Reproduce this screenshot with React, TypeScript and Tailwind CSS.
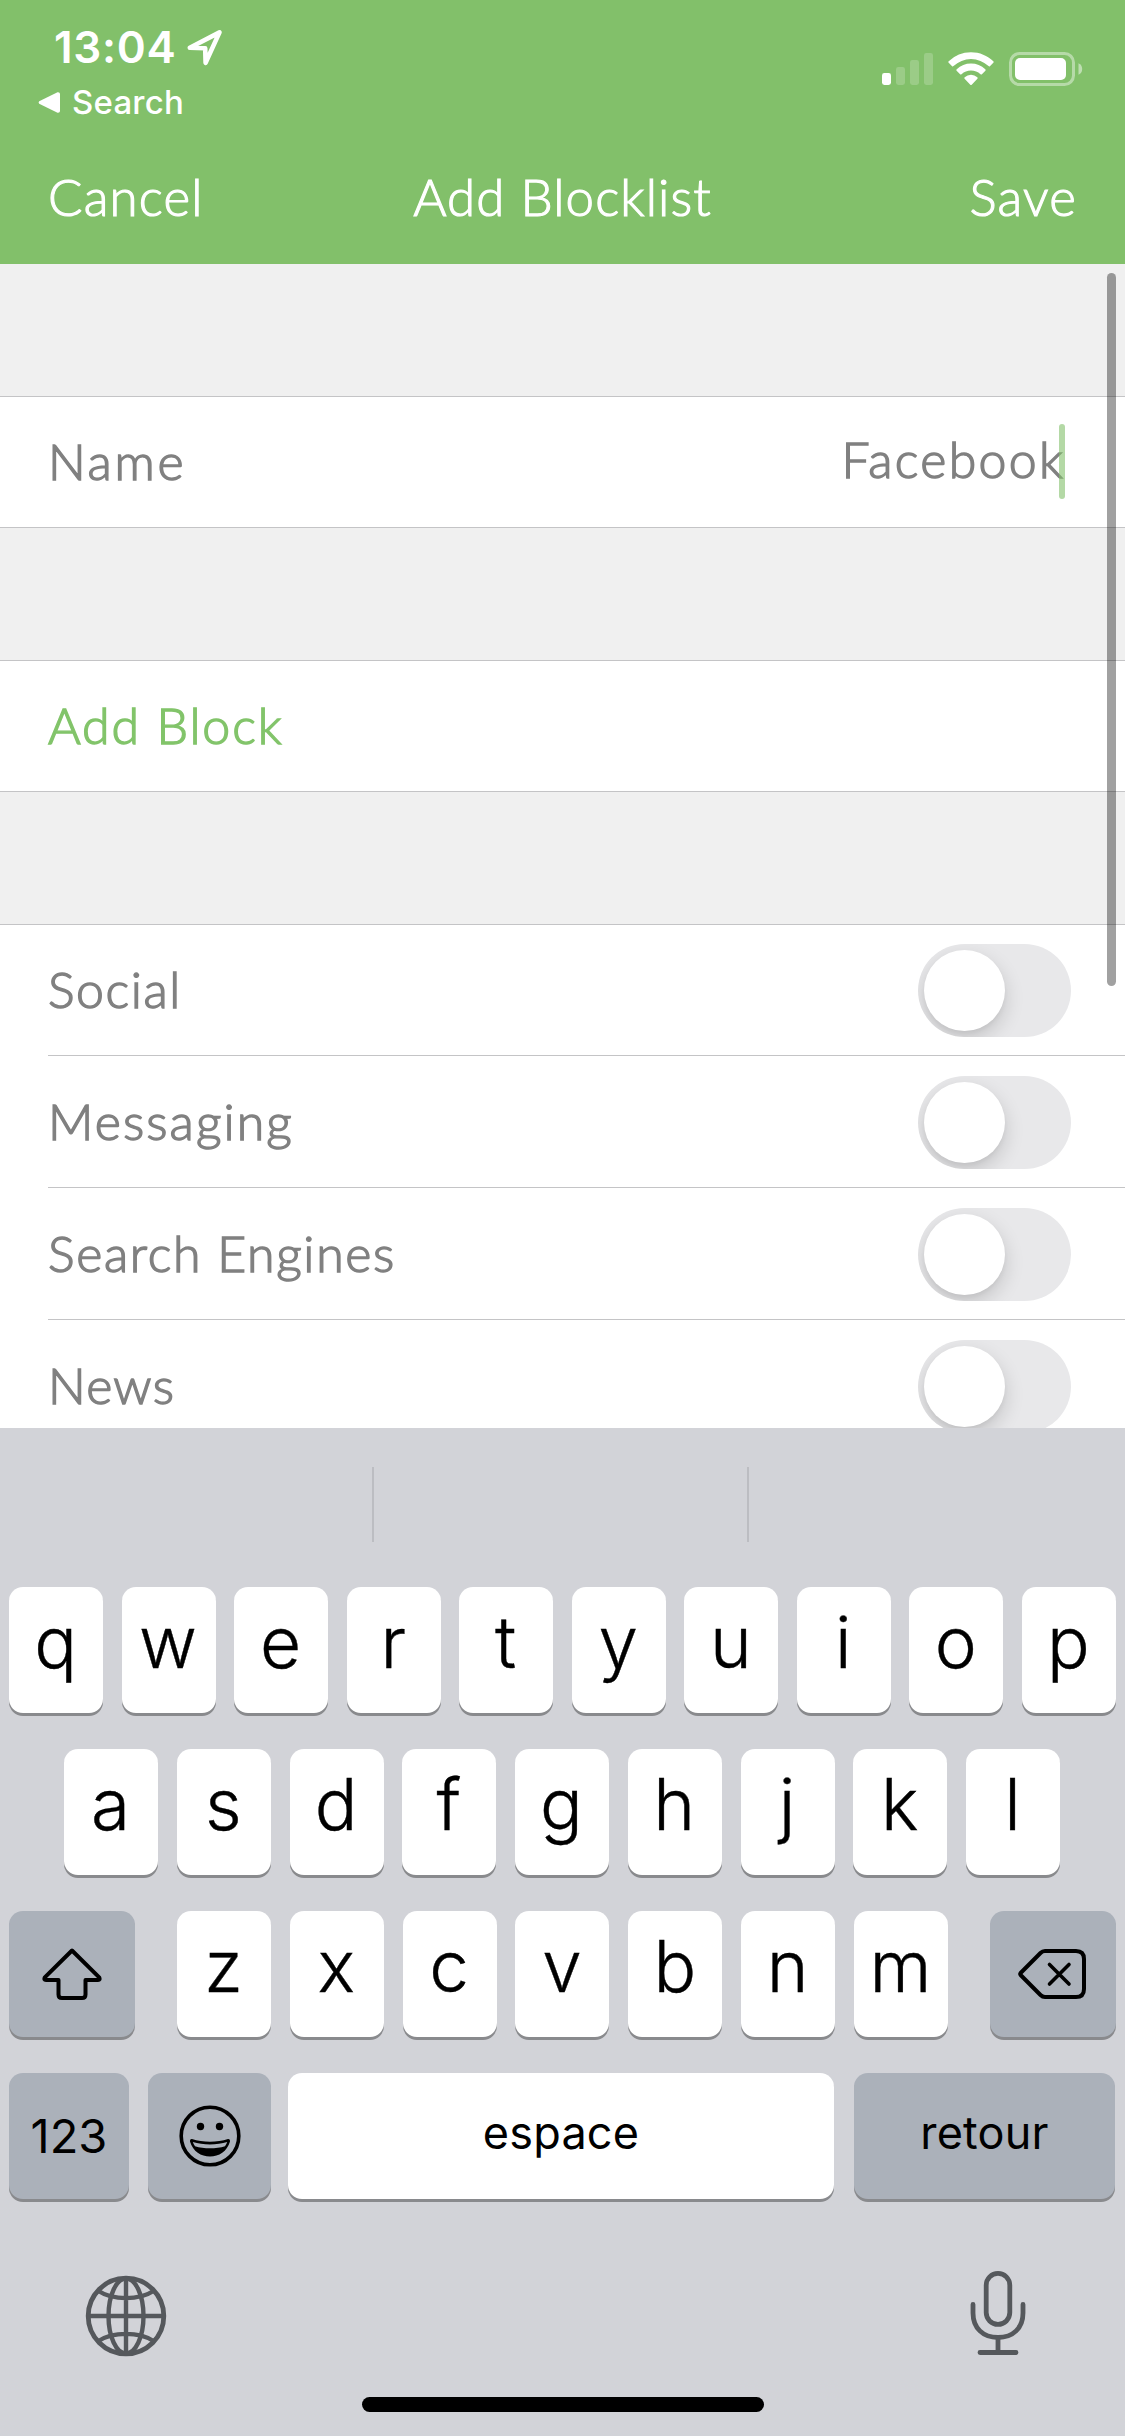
import React from "react";

const BODY_FONT = "font-['Lato','Open_Sans',sans-serif]";

function LocationIcon() {
  return (
    <svg width="36" height="37" viewBox="0 0 36 37" fill="none" stroke="#fff" strokeWidth="4.6" strokeLinejoin="round">
      <path d="M2.800 18.800 32.500 3.400 18.600 33.800 18.200 19.200Z" />
    </svg>
  );
}

function SignalIcon() {
  return (
    <svg width="51" height="34" viewBox="0 0 51 34" fill="#fff">
      <rect x="0" y="21" width="9" height="12" rx="2.4" />
      <rect x="14" y="15" width="9" height="18" rx="2.4" opacity=".2" />
      <rect x="28" y="8" width="9" height="25" rx="2.4" opacity=".2" />
      <rect x="42" y="1" width="9" height="32" rx="2.4" opacity=".2" />
    </svg>
  );
}

function WifiIcon() {
  return (
    <svg width="46" height="34" viewBox="0 0 46 34" fill="#fff">
      <path d="M23 .2C31.600 .2 39.500 3.600 45.300 9.200Q46 9.900 45.300 10.700L41.900 14.200Q41.300 14.800 40.500 14.100A25.300 25.300 0 0 0 5.500 14.100Q4.700 14.800 4.100 14.200L.7 10.700Q0 9.900.7 9.200A32 32 0 0 1 23 .2Z" />
      <path d="M23 11.600A21 21 0 0 1 37.300 17.300Q38.100 18 37.400 18.800L33.900 22.300Q33.300 22.900 32.500 22.200A14.100 14.100 0 0 0 13.500 22.200Q12.700 22.900 12.100 22.300L8.600 18.800Q7.900 18 8.700 17.300A21 21 0 0 1 23 11.600Z" />
      <path d="M23 22.800A10 10 0 0 1 29.300 25.300Q30.100 26 29.400 26.800L23.700 32.700Q23 33.300 22.300 32.700L16.600 26.800Q15.900 26 16.700 25.300A10 10 0 0 1 23 22.800Z" />
    </svg>
  );
}

function BatteryIcon() {
  return (
    <svg width="74" height="34" viewBox="0 0 74 34" fill="none">
      <rect x="1.500" y="1.500" width="63" height="31" rx="9" stroke="#fff" strokeOpacity=".42" strokeWidth="3" />
      <rect x="6" y="6" width="51" height="22" rx="5" fill="#fff" />
      <path d="M69.500 11.200A6.400 6.400 0 0 1 69.500 22.800Z" fill="#fff" fillOpacity=".48" />
    </svg>
  );
}

function Header() {
  return (
    <header className="h-[264px] shrink-0 bg-[#82c06a] text-white">
      <div className="flex h-[136px] items-start justify-between pl-[38px] pr-[42px]">
        <div className="font-['Inter',sans-serif]">
          <div className="flex h-[60px] items-center pl-[16px] pt-[34px]">
            <span className="w-[133px] text-[44px] font-semibold leading-none tracking-[0.7px]">13:04</span>
            <LocationIcon />
          </div>
          <div className="flex h-[76px] items-center pt-[8px]">
            <svg width="22" height="21" viewBox="0 0 22 21" fill="#fff">
              <path d="M1.200 9.300 19.500.3Q22 0 22 2V19Q22 21 19.500 20.700L1.200 11.700Q0 10.500 1.200 9.300Z" />
            </svg>
            <span className="ml-[12px] text-[33px] font-medium leading-none tracking-[0.2px]">Search</span>
          </div>
        </div>
        <div className="flex pt-[52px]">
          <SignalIcon />
          <div className="ml-[15px]"><WifiIcon /></div>
          <div className="ml-[15px]"><BatteryIcon /></div>
        </div>
      </div>
      <nav className={`grid h-[122px] grid-cols-3 items-center px-[48px] text-[51px] font-light [-webkit-text-stroke:1.1px_currentColor] ${BODY_FONT}`}>
        <span className="tracking-[1.2px]">Cancel</span>
        <span className="text-center tracking-[1.1px]">Add Blocklist</span>
        <span className="text-right tracking-[1.2px]">Save</span>
      </nav>
    </header>
  );
}

function Toggle() {
  return (
    <div className="h-[93px] w-[153px] shrink-0 overflow-hidden rounded-full bg-[#e8e8ea] p-[6px]">
      <div className="size-[81px] rounded-full bg-white shadow-[0_8px_20px_rgba(0,0,0,0.16),0_3px_4px_rgba(0,0,0,0.04)]" />
    </div>
  );
}

const CATEGORIES = [
  { name: "Social", tracking: "tracking-[1.6px]" },
  { name: "Messaging", tracking: "tracking-[2.1px]" },
  { name: "Search Engines", tracking: "tracking-[1.65px]" },
  { name: "News", tracking: "tracking-[1.2px]" },
];

function Settings() {
  return (
    <main className={`relative h-[1164px] shrink-0 overflow-hidden bg-[#f0f0f0] pt-[132px] text-[50px] font-light text-[#808080] [-webkit-text-stroke:1.4px_currentColor] ${BODY_FONT}`}>
      <div className="flex h-[132px] items-center justify-between border-y border-[#c4c4c6] bg-white pl-[48px] pr-[60px]">
        <span className="pb-[2px] tracking-[2.7px]">Name</span>
        <div className="relative mb-[2px] flex h-[75px] items-center pb-[3px]">
          <span className="tracking-[2.3px]">Facebook</span>
          <i className="absolute right-0 top-0 h-[75px] w-[6px] rounded-full bg-[#82c06a]/60" />
        </div>
      </div>
      <div className="mt-[132px] flex h-[132px] items-center border-y border-[#c4c4c6] bg-white pl-[48px] text-[#82c46a]">
        <span className="pb-[2px] tracking-[1.9px]">Add Block</span>
      </div>
      <div className="mt-[132px] border-t border-[#c4c4c6] bg-white pl-[48px]">
        {CATEGORIES.map((c) => (
          <div key={c.name} className="flex h-[132px] items-center justify-between border-b border-[#c4c4c6] pr-[54px] pt-[2px] first:h-[131px] first:pt-0">
            <span className={`pb-[2px] ${c.tracking}`}>{c.name}</span>
            <Toggle />
          </div>
        ))}
      </div>
      <div className="absolute right-[9px] top-[9px] h-[713px] w-[9px] rounded-full bg-black/37" />
    </main>
  );
}

const KEY = "flex h-[126px] items-center justify-center rounded-[14px] shadow-[0_3px_0_#898a8d]";

function LetterKey({ children }: { children: string }) {
  return <div className={`${KEY} w-[94px] shrink-0 bg-white pb-[16px] pr-px text-[71px] font-[350] leading-none [-webkit-text-stroke:0.4px_#000]`}>{children}</div>;
}

function Keyboard() {
  return (
    <section className="flex h-[1008px] flex-col bg-[#d2d3d8] font-['Inter',sans-serif] text-black">
      <div className="flex h-[159px] pt-[39px]">
        <div className="h-[75px] w-[374px] border-r-2 border-[#bcbdc2]" />
        <div className="h-[75px] w-[375px] border-r-2 border-[#bcbdc2]" />
      </div>
      <div className="flex h-[162px] justify-between px-[9px]">
        {"qwertyuiop".split("").map((k) => <LetterKey key={k}>{k}</LetterKey>)}
      </div>
      <div className="flex h-[162px] justify-between pl-[64px] pr-[65px]">
        {"asdfghjkl".split("").map((k) => <LetterKey key={k}>{k}</LetterKey>)}
      </div>
      <div className="flex h-[162px] justify-between px-[9px]">
        <div className={`${KEY} w-[126px] bg-[#abb1ba]`}>
          <svg width="60" height="54" viewBox="0 0 60 54" fill="none" stroke="#000" strokeWidth="4" strokeLinejoin="round">
            <path d="M30 3.500 57.200 30.400Q58.400 33 56 33H43.500V47.500Q43.500 51 40 51H20Q16.500 51 16.500 47.500V33H4Q1.600 33 2.800 30.400Z" />
          </svg>
        </div>
        <div className="flex w-[771px] justify-between">
          {"zxcvbnm".split("").map((k) => <LetterKey key={k}>{k}</LetterKey>)}
        </div>
        <div className={`${KEY} w-[126px] bg-[#abb1ba] pr-[2px]`}>
          <svg width="68" height="50" viewBox="0 0 68 50" fill="none" stroke="#000" strokeWidth="4" strokeLinejoin="round" strokeLinecap="round">
            <path d="M27 2H58Q66 2 66 10V40Q66 48 58 48H27Q24.500 48 22.500 46L2.600 26Q1.800 25 2.600 24L22.500 4Q24.500 2 27 2Z" />
            <path d="M31.500 15.500 51 35M51 15.500 31.500 35" strokeWidth="3.600" />
          </svg>
        </div>
      </div>
      <div className="flex h-[129px] px-[9px]">
        <div className={`${KEY} w-[120px] bg-[#abb1ba] text-[47px] font-[380] tracking-[0px]`}>123</div>
        <div className={`${KEY} ml-[19px] w-[123px] bg-[#abb1ba]`}>
          <svg width="62" height="62" viewBox="0 0 62 62">
            <circle cx="31" cy="31" r="28.800" fill="none" stroke="#000" strokeWidth="3.600" />
            <circle cx="21.500" cy="21.500" r="3.700" />
            <circle cx="40.500" cy="21.500" r="3.700" />
            <path d="M13 34C24 37.600 38 37.600 49 34Q51.500 33.600 51 36.500C48 46.500 40 51.500 31 51.500S14 46.500 11 36.500Q10.500 33.600 13 34Z" />
            <path d="M13.800 37C24 40.200 38 40.200 48.200 37Q47.400 39.400 46 41.200C37 44 25 44 16 41.200Q14.600 39.400 13.800 37Z" fill="#abb1ba" />
          </svg>
        </div>
        <div className={`${KEY} ml-[17px] w-[546px] bg-white pb-[7px] text-[45px] font-[380] tracking-[0.2px]`}>espace</div>
        <div className={`${KEY} ml-[20px] w-[261px] bg-[#abb1ba] pb-[7px] text-[45px] font-[380] tracking-[0.2px]`}>retour</div>
      </div>
      <div className="flex h-[195px] items-start justify-between pl-[85px] pr-[98px] pt-[67px]">
        <svg className="mt-[6px]" width="82" height="82" viewBox="0 0 82 82" fill="none" stroke="#55585c" strokeWidth="4.400">
          <circle cx="41" cy="41" r="37.800" strokeWidth="4.800" />
          <path d="M41 3V79M3 41H79M13.500 16C28 25.500 54 25.500 68.500 16M13.500 66C28 56.500 54 56.500 68.500 66" />
          <ellipse cx="41" cy="41" rx="17.500" ry="37.500" />
        </svg>
        <svg width="58" height="88" viewBox="0 0 58 88" fill="none" stroke="#55585c" strokeWidth="4.800" strokeLinecap="round">
          <rect x="17.200" y="4.400" width="23.600" height="51" rx="11.800" />
          <path d="M4 35.500V44C4 59 14 68.500 29 68.500S54 59 54 44V35.500M29 69V83M11 83.500H47" />
        </svg>
      </div>
      <div className="mx-auto h-[15px] w-[402px] rounded-full bg-black" />
    </section>
  );
}

export default function App() {
  return (
    <div className="flex h-[2436px] w-[1125px] flex-col overflow-hidden">
      <Header />
      <Settings />
      <Keyboard />
    </div>
  );
}
